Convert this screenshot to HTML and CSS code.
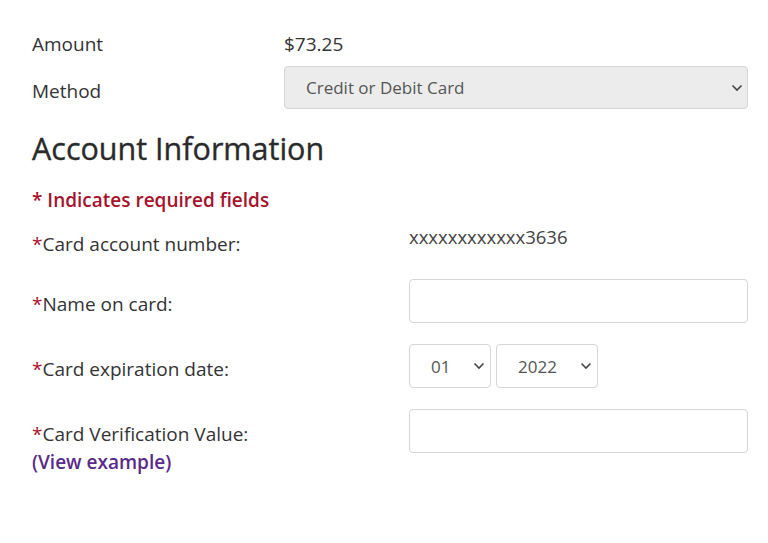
FILE: index.html
```html
<!DOCTYPE html>
<html lang="en">
<head>
    <meta charset="UTF-8">
    <meta name="viewport" content="width=device-width, initial-scale=1.0">
    <title>Payment</title>
    <link rel="stylesheet" href="styles.css">
</head>
<body>
    <div class="page">
        <div class="summary">
            <div class="label">Amount</div>
            <div class="value">$73.25</div>
            <div class="label method-label">Method</div>
            <div class="select-wrap wide">
                <select class="select grey">
                    <option>Credit or Debit Card</option>
                </select>
                <svg class="chev" width="12" height="8" viewBox="0 0 12 8"><path d="M1.5 1.5 6 6l4.5-4.5" fill="none" stroke="#444" stroke-width="1.6"/></svg>
            </div>
        </div>

        <h2 class="title">Account Information</h2>
        <p class="required">* Indicates required fields</p>

        <div class="form">
            <div class="flabel"><span class="star">*</span>Card account number:</div>
            <div class="masked">xxxxxxxxxxxx3636</div>

            <div class="flabel"><span class="star">*</span>Name on card:</div>
            <input class="input" type="text">

            <div class="flabel"><span class="star">*</span>Card expiration date:</div>
            <div class="dates">
                <div class="select-wrap month">
                    <select class="select small">
                        <option>01</option>
                    </select>
                    <svg class="chev" width="12" height="8" viewBox="0 0 12 8"><path d="M1.5 1.5 6 6l4.5-4.5" fill="none" stroke="#444" stroke-width="1.6"/></svg>
                </div>
                <div class="select-wrap year">
                    <select class="select small">
                        <option>2022</option>
                    </select>
                    <svg class="chev" width="12" height="8" viewBox="0 0 12 8"><path d="M1.5 1.5 6 6l4.5-4.5" fill="none" stroke="#444" stroke-width="1.6"/></svg>
                </div>
            </div>

            <div class="flabel"><span class="star">*</span>Card Verification Value:<br><a class="example" href="#">(View example)</a></div>
            <input class="input" type="text">
        </div>
    </div>
</body>
</html>
```

FILE: styles.css
```css
body{
    margin: 0;
    background: #fff;
    color: #333;
    font-family: "Open Sans", "Noto Sans", sans-serif;
}
.page{
    padding: 32px 20px 0 32px;
}
.summary{
    display: grid;
    grid-template-columns: 252px 1fr;
    row-gap: 10px;
    align-items: center;
}
.label, .value{
    font-size: 19px;
    line-height: 24px;
}
.method-label{
    padding-top: 6px;
}
.select-wrap{
    position: relative;
}
.select{
    appearance: none;
    -webkit-appearance: none;
    width: 100%;
    height: 44px;
    box-sizing: border-box;
    border: 1px solid #d6d6d6;
    border-radius: 4px;
    background: #fff;
    font-family: "Open Sans", "Noto Sans", sans-serif;
    color: #555;
    outline: none;
}
.grey{
    height: 43px;
    background: #ececec;
    font-size: 17px;
    padding: 0 21px;
}
.chev{
    position: absolute;
    right: 6px;
    top: 50%;
    margin-top: -4px;
    pointer-events: none;
}
.wide .chev{
    right: 5px;
}
.title{
    margin: 20px 0 0;
    font-size: 30.5px;
    font-weight: 500;
    line-height: 38px;
    color: #2a2a2a;
    -webkit-text-stroke: 0.35px #2a2a2a;
}
.required{
    margin: 20px 0 0;
    font-size: 19px;
    font-weight: 600;
    line-height: 26px;
    color: #a8112b;
}
.form{
    margin-top: 6px;
    display: grid;
    grid-template-columns: 377px 1fr;
    row-gap: 21px;
    align-items: start;
}
.flabel{
    font-size: 19px;
    line-height: 28px;
    padding-top: 11px;
}
.star{
    color: #a8112b;
}
.masked{
    font-size: 18.5px;
    line-height: 24px;
    padding-top: 6px;
    color: #444;
}
.input{
    height: 44px;
    box-sizing: border-box;
    border: 1px solid #d6d6d6;
    border-radius: 4px;
    font-size: 17px;
    outline: none;
}
.dates{
    display: flex;
    gap: 5px;
}
.month{
    width: 82px;
}
.year{
    width: 102px;
}
.small{
    font-size: 17px;
    padding: 0 0 0 21px;
}
.example{
    color: #5a2a8a;
    font-weight: 600;
    text-decoration: none;
}
```
